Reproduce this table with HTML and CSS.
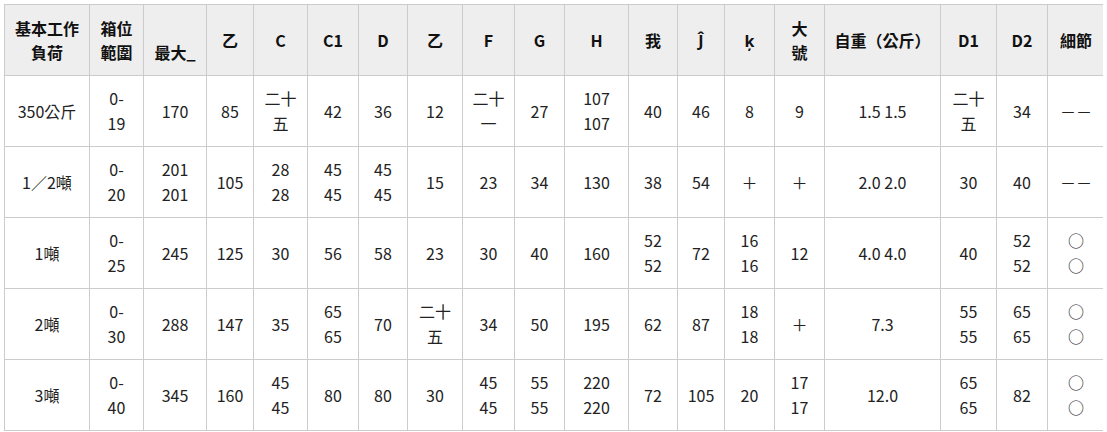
FILE: index.html
```html
<!DOCTYPE html>
<html lang="zh-Hant">
<head>
<meta charset="utf-8">
<title>規格表</title>
<link rel="stylesheet" href="styles.css">
</head>
<body>
<table class="spec">
  <colgroup>
    <col class="w85"><col class="w54"><col class="w63"><col class="w47"><col class="w54">
    <col class="w51"><col class="w49"><col class="w55"><col class="w52"><col class="w50">
    <col class="w64"><col class="w49"><col class="w47"><col class="w50"><col class="w50">
    <col class="w116"><col class="w56"><col class="w51"><col class="w57">
  </colgroup>
  <thead>
    <tr>
      <th>基本工作<br>負荷</th>
      <th>箱位<br>範圍</th>
      <th class="low">最大_</th>
      <th>乙</th>
      <th>C</th>
      <th>C1</th>
      <th>D</th>
      <th>乙</th>
      <th>F</th>
      <th>G</th>
      <th>H</th>
      <th>我</th>
      <th>Ĵ</th>
      <th>ķ</th>
      <th>大<br>號</th>
      <th>自重（公斤）</th>
      <th>D1</th>
      <th>D2</th>
      <th>細節</th>
    </tr>
  </thead>
  <tbody>
    <tr>
      <td>350公斤</td><td>0-<br>19</td><td>170</td><td>85</td><td>二十<br>五</td><td>42</td><td>36</td><td>12</td><td>二十<br>一</td><td>27</td><td>107<br>107</td><td>40</td><td>46</td><td>8</td><td>9</td><td>1.5 1.5</td><td>二十<br>五</td><td>34</td><td>－－</td>
    </tr>
    <tr>
      <td>1／2噸</td><td>0-<br>20</td><td>201<br>201</td><td>105</td><td>28<br>28</td><td>45<br>45</td><td>45<br>45</td><td>15</td><td>23</td><td>34</td><td>130</td><td>38</td><td>54</td><td>＋</td><td>＋</td><td>2.0 2.0</td><td>30</td><td>40</td><td>－－</td>
    </tr>
    <tr>
      <td>1噸</td><td>0-<br>25</td><td>245</td><td>125</td><td>30</td><td>56</td><td>58</td><td>23</td><td>30</td><td>40</td><td>160</td><td>52<br>52</td><td>72</td><td>16<br>16</td><td>12</td><td>4.0 4.0</td><td>40</td><td>52<br>52</td><td>○<br>○</td>
    </tr>
    <tr>
      <td>2噸</td><td>0-<br>30</td><td>288</td><td>147</td><td>35</td><td>65<br>65</td><td>70</td><td>二十<br>五</td><td>34</td><td>50</td><td>195</td><td>62</td><td>87</td><td>18<br>18</td><td>＋</td><td>7.3</td><td>55<br>55</td><td>65<br>65</td><td>○<br>○</td>
    </tr>
    <tr>
      <td>3噸</td><td>0-<br>40</td><td>345</td><td>160</td><td>45<br>45</td><td>80</td><td>80</td><td>30</td><td>45<br>45</td><td>55<br>55</td><td>220<br>220</td><td>72</td><td>105</td><td>20</td><td>17<br>17</td><td>12.0</td><td>65<br>65</td><td>82</td><td>○<br>○</td>
    </tr>
  </tbody>
</table>
</body>
</html>
```
FILE: styles.css
```css
html, body {
  background: #ffffff;
}
body {
  margin: 4px;
  font-family: "Noto Sans CJK TC", "Noto Sans", sans-serif;
  font-size: 16px;
  color: #222222;
}
.spec {
  width: 1101px;
  table-layout: fixed;
  border-collapse: collapse;
}
.spec th,
.spec td {
  border: 1px solid #cccccc;
  text-align: center;
  vertical-align: middle;
  padding: 10px 4px;
  white-space: nowrap;
}
.spec th {
  background: #eeeeee;
  font-weight: 700;
  color: #111111;
  line-height: 24px;
  padding-top: 11px;
  padding-bottom: 11px;
}
.spec td {
  line-height: 25px;
  height: 50px;
}
.spec th.low {
  padding-top: 35px;
}
.w85 { width: 85px; }
.w54 { width: 54px; }
.w63 { width: 63px; }
.w47 { width: 47px; }
.w51 { width: 51px; }
.w49 { width: 49px; }
.w55 { width: 55px; }
.w52 { width: 52px; }
.w50 { width: 50px; }
.w64 { width: 64px; }
.w116 { width: 116px; }
.w56 { width: 56px; }
.w57 { width: 57px; }
```
